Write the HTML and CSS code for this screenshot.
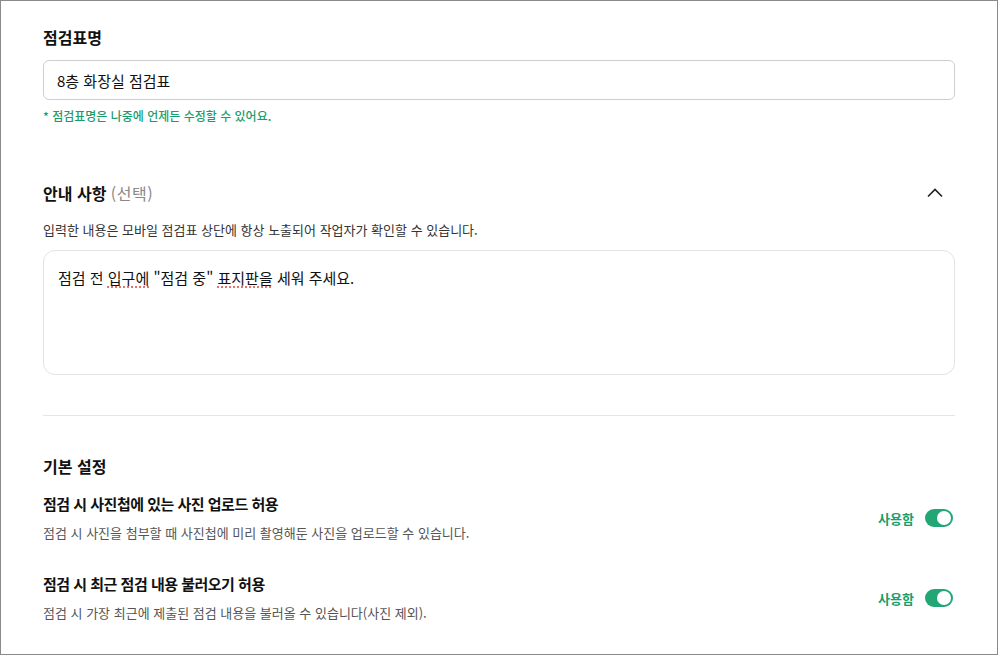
FILE: index.html
```html
<!DOCTYPE html>
<html lang="ko">
  <head>
    <meta charset="UTF-8" />
    <meta name="viewport" content="width=device-width, initial-scale=1.0" />
    <title>점검표 설정</title>
    <link rel="stylesheet" href="styles.css">
  </head>
  <body>
    <div class="frame">
      <section class="field">
        <h2 class="label">점검표명</h2>
        <input class="text-input" type="text" value="8층 화장실 점검표" />
        <p class="hint">* 점검표명은 나중에 언제든 수정할 수 있어요.</p>
      </section>

      <section class="guide">
        <div class="guide-head">
          <h2 class="label">안내 사항 <span class="optional">(선택)</span></h2>
          <button class="fold" type="button" aria-label="접기">
            <svg width="20" height="20" viewBox="0 0 20 20">
              <polyline points="3,13.5 10,6.5 17,13.5" fill="none" stroke="#222" stroke-width="1.6" />
            </svg>
          </button>
        </div>
        <p class="desc">입력한 내용은 모바일 점검표 상단에 항상 노출되어 작업자가 확인할 수 있습니다.</p>
        <div class="memo">점검 전 <span class="typo">입구에</span> "점검 중" <span class="typo">표지판을</span> 세워 주세요.</div>
      </section>

      <hr class="divider" />

      <section class="settings">
        <h2 class="label">기본 설정</h2>
        <div class="option first">
          <div class="option-text">
            <h3 class="option-title">점검 시 사진첩에 있는 사진 업로드 허용</h3>
            <p class="option-desc">점검 시 사진을 첨부할 때 사진첩에 미리 촬영해둔 사진을 업로드할 수 있습니다.</p>
          </div>
          <div class="switch-wrap">
            <span class="switch-label">사용함</span>
            <span class="switch on"><span class="knob"></span></span>
          </div>
        </div>
        <div class="option">
          <div class="option-text">
            <h3 class="option-title">점검 시 최근 점검 내용 불러오기 허용</h3>
            <p class="option-desc">점검 시 가장 최근에 제출된 점검 내용을 불러올 수 있습니다(사진 제외).</p>
          </div>
          <div class="switch-wrap">
            <span class="switch-label">사용함</span>
            <span class="switch on"><span class="knob"></span></span>
          </div>
        </div>
      </section>
    </div>
  </body>
</html>
```

FILE: styles.css
```css
* {
  box-sizing: border-box;
}
body {
  margin: 0;
  font-family: "Noto Sans CJK KR", "Noto Sans", sans-serif;
  color: #111;
  background: #fff;
}
.frame {
  height: 655px;
  border: 1px solid #8a8a8a;
  padding: 24px 42px 0 42px;
  overflow: hidden;
}
h2,
h3,
p {
  margin: 0;
}
.label {
  font-size: 16px;
  line-height: 24px;
  font-weight: 700;
  color: #111;
}
.optional {
  font-weight: 400;
  color: #888;
  letter-spacing: 0.5px;
}
.text-input {
  display: block;
  width: 100%;
  height: 40px;
  margin-top: 11px;
  padding: 0 13px;
  border: 1px solid #cfcfcf;
  border-radius: 6px;
  font-family: inherit;
  font-size: 15px;
  color: #111;
  outline: none;
}
.hint {
  margin-top: 7px;
  font-size: 12px;
  line-height: 18px;
  font-weight: 500;
  color: #1a9d6c;
}
.guide {
  margin-top: 56px;
}
.guide-head {
  display: flex;
  justify-content: space-between;
  align-items: center;
}
.fold {
  border: 0;
  background: none;
  padding: 0;
  margin-right: 10px;
  width: 20px;
  height: 20px;
  cursor: pointer;
}
.desc {
  margin-top: 15px;
  font-size: 13px;
  line-height: 20px;
  color: #333;
}
.memo {
  margin-top: 10px;
  height: 125px;
  padding: 16px 14px;
  border: 1px solid #e3e3e3;
  border-radius: 12px;
  font-size: 15px;
  line-height: 22px;
  color: #111;
}
.typo {
  text-decoration: underline dotted #e0443a;
  text-underline-offset: 3px;
}
.divider {
  margin: 40px 0 0 0;
  border: 0;
  border-top: 1px solid #e5e5e5;
}
.settings {
  margin-top: 38px;
}
.option {
  display: flex;
  justify-content: space-between;
  align-items: center;
  margin-top: 30px;
}
.option.first {
  margin-top: 15px;
}
.option-title {
  font-size: 15px;
  line-height: 22px;
  font-weight: 700;
  letter-spacing: -0.5px;
  color: #111;
}
.option-desc {
  margin-top: 8px;
  font-size: 13px;
  line-height: 20px;
  color: #555;
}
.switch-wrap {
  display: flex;
  align-items: center;
  gap: 11px;
  margin-right: 2px;
}
.switch-label {
  font-size: 13px;
  font-weight: 700;
  color: #1a9d6c;
}
.switch {
  position: relative;
  display: inline-block;
  width: 28px;
  height: 18px;
  border-radius: 9px;
  background: #23a676;
}
.switch .knob {
  position: absolute;
  top: 2px;
  right: 2px;
  width: 14px;
  height: 14px;
  border-radius: 50%;
  background: #fff;
}
```
